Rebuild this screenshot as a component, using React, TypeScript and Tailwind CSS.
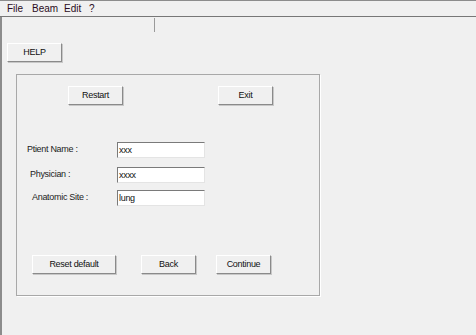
const font = { fontFamily: '"Liberation Sans", Arial, sans-serif' }

function Btn({ label, className = "" }: { label: string; className?: string }) {
    return (
        <button
            className={`h-[19px] bg-[#f0f0f0] border border-t-white border-l-white border-b-[#8a8a8a] border-r-[#8a8a8a] shadow-[1px_1px_0_#c8c8c8] text-[9px] tracking-[-0.3px] text-[#111] leading-none ${className}`}
        >
            {label}
        </button>
    )
}

function Field({ label, value, indent }: { label: string; value: string; indent: string }) {
    return (
        <div className="flex items-center h-[15px]">
            <span className={`w-[100px] text-[9px] tracking-[-0.3px] text-[#222] ${indent}`}>{label}</span>
            <div className="w-[88px] h-[16px] bg-white border border-t-[#7a7a7a] border-l-[#7a7a7a] border-b-[#e4e4e4] border-r-[#e4e4e4] text-[9px] tracking-[-0.3px] text-[#111] leading-[14px] pl-[1px]">
                {value}
            </div>
        </div>
    )
}

export default function App() {
    return (
        <div className="w-[476px] h-[335px] bg-[#f0f0f0] overflow-hidden border-t border-[#8c8c8c] flex flex-col" style={font}>
            {/* menu bar */}
            <div className="h-[16px] flex items-center pl-[7px] border-b border-[#777] text-[10px] text-[#2a0c22] shrink-0">
                <span className="w-[25px]">File</span>
                <span className="w-[32px]">Beam</span>
                <span className="w-[25px]">Edit</span>
                <span>?</span>
            </div>

            <div className="flex-1 border-l-2 border-[#8c8c8c] flex flex-col">
                {/* toolbar separator */}
                <div className="h-[21px] pl-[152px] pt-[1px] shrink-0">
                    <div className="w-[1px] h-[14px] bg-[#9a9a9a]" />
                </div>

                <div className="pl-[5px]">
                    <Btn label="HELP" className="w-[55px]" />
                </div>

                {/* group panel */}
                <div className="ml-[14px] mt-[12px] w-[304px] h-[222px] border border-[#a8a8a8] shadow-[1px_1px_0_#ffffff] flex flex-col">
                    <div className="flex pt-[11px] pl-[51px] gap-[95px]">
                        <Btn label="Restart" className="w-[55px]" />
                        <Btn label="Exit" className="w-[55px]" />
                    </div>

                    <div className="flex flex-col mt-[37px]">
                        <Field label="Ptient Name :" value="xxx" indent="pl-[10px]" />
                        <div className="h-[10px]" />
                        <Field label="Physician :" value="xxxx" indent="pl-[13px]" />
                        <div className="h-[8px]" />
                        <Field label="Anatomic Site :" value="lung" indent="pl-[15px]" />
                    </div>

                    <div className="flex pl-[15px] mt-[50px]">
                        <Btn label="Reset default" className="w-[84px]" />
                        <Btn label="Back" className="w-[55px] ml-[25px]" />
                        <Btn label="Continue" className="w-[55px] ml-[20px]" />
                    </div>
                </div>
            </div>
        </div>
    )
}
